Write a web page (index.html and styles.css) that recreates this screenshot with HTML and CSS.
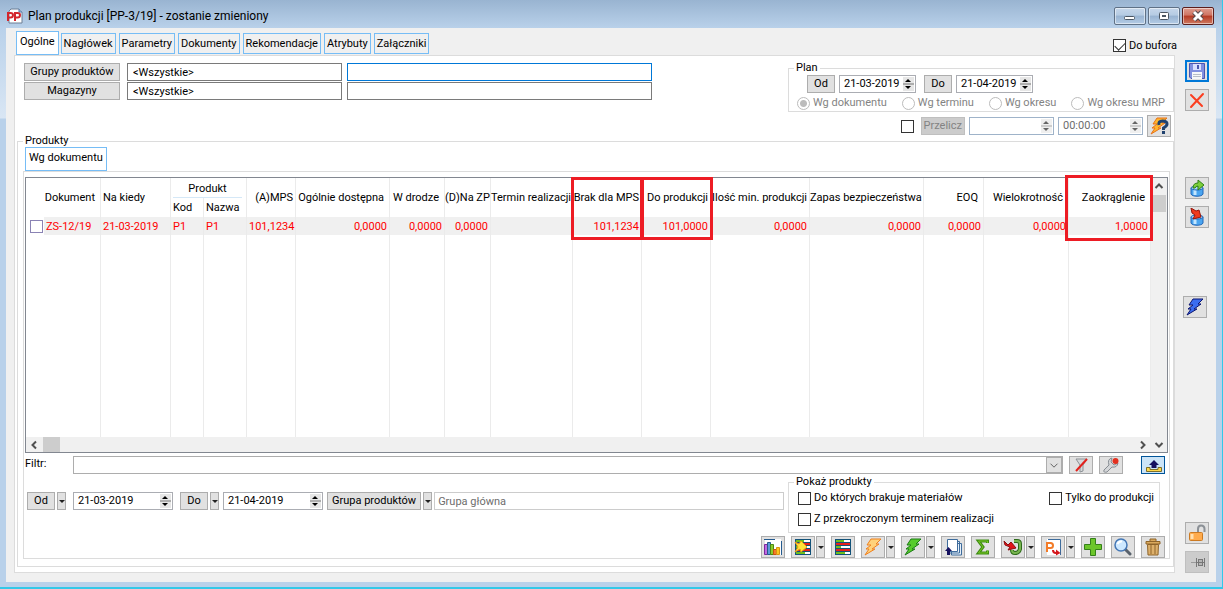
FILE: index.html
```html
<!DOCTYPE html>
<html lang="pl">
<head>
    <meta charset="UTF-8">
    <meta name="viewport" content="width=device-width, initial-scale=1.0">
    <title>Plan produkcji</title>
    <link rel="stylesheet" href="styles.css">
</head>
<body>
    <!-- Shared icons -->
    <svg class="sprite" aria-hidden="true">
        <symbol id="bolt" viewBox="0 0 20 18">
            <path d="M8 1H18L13 6H16L9 11H12L2 17L6 11H3L8 7H4Z" stroke-width="1"/>
        </symbol>
        <symbol id="rows" viewBox="0 0 20 18">
            <rect x="2" y="1" width="16" height="16" fill="#135279"/>
            <path d="M3 3H17M3 9H17M3 15H17" stroke="#fff" stroke-width="2"/>
            <path d="M3 3H11M3 9H8M3 15H12" stroke="#6fbd1c" stroke-width="2"/>
            <path d="M3 6H17M3 12H17" stroke="#e6201c" stroke-width="2"/>
        </symbol>
        <symbol id="can" viewBox="0 0 20 18">
            <path d="M4 9V15C5 18 15 18 16 15V9Z" fill="#4aa5f0" stroke="#2166b8"/>
            <path d="M8 11V16" stroke="#c4e6ff" stroke-width="3"/>
            <ellipse cx="10" cy="9" rx="6" ry="2" fill="#a9d5f7" stroke="#2166b8"/>
        </symbol>
    </svg>

    <div class="window">
        <header class="titlebar">
            <svg class="app-icon" viewBox="0 0 16 16">
                <path d="M4 1H12L15 4V15H2V3Z" fill="#fff" stroke="#6d7f95"/>
                <path d="M12 1V4H15" fill="#a9c3de" stroke="#4c74a8"/>
                <path d="M1 13V5H3.500Q6 5 6 7Q6 9.500 3.500 9.500H1M8 13V5H10.500Q13 5 13 7Q13 9.500 10.500 9.500H8" fill="none" stroke="#d3262d" stroke-width="2"/>
            </svg>
            <h1>Plan produkcji [PP-3/19] - zostanie zmieniony</h1>
            <div class="window-buttons">
                <button type="button" aria-label="Minimalizuj"><svg viewBox="0 0 30 16"><rect x="9.500" y="8.500" width="10" height="3" rx="1" fill="#fff" stroke="#4b5663"/></svg></button>
                <button type="button" aria-label="Maksymalizuj"><svg viewBox="0 0 30 16"><rect x="10.500" y="4.500" width="9" height="7" rx="1" fill="#fff" stroke="#4b5663"/><rect x="13.500" y="7.500" width="3" height="1" fill="#8fa9c6" stroke="#4b5663"/></svg></button>
                <button type="button" class="close" aria-label="Zamknij"><svg viewBox="0 0 30 16"><path d="M11 4L19 12M19 4L11 12" stroke="#54494d" stroke-width="5"/><path d="M11 4L19 12M19 4L11 12" stroke="#fff" stroke-width="3"/></svg></button>
            </div>
        </header>

        <div class="client">
            <main>
                <div class="top">
                    <nav class="tabs">
                        <button type="button" class="active">Ogólne</button>
                        <button type="button">Nagłówek</button>
                        <button type="button">Parametry</button>
                        <button type="button">Dokumenty</button>
                        <button type="button">Rekomendacje</button>
                        <button type="button">Atrybuty</button>
                        <button type="button">Załączniki</button>
                    </nav>
                    <label class="check buffer"><input type="checkbox" checked>Do bufora</label>
                </div>

                <div class="panel">
                    <div class="head">
                        <div class="filters">
                            <button type="button" class="btn">Grupy produktów</button>
                            <input type="text" class="field" aria-label="Grupa" value="&lt;Wszystkie&gt;">
                            <input type="text" class="field focused" aria-label="Opis grupy">
                            <button type="button" class="btn">Magazyny</button>
                            <input type="text" class="field" aria-label="Magazyn" value="&lt;Wszystkie&gt;">
                            <input type="text" class="field" aria-label="Opis magazynu">
                        </div>

                        <div class="plan">
                            <fieldset class="group">
                                <legend>Plan</legend>
                                <div class="dates">
                                    <button type="button" class="btn small">Od</button>
                                    <span class="spin"><input type="text" aria-label="Plan od" value="21-03-2019"><i></i></span>
                                    <button type="button" class="btn small">Do</button>
                                    <span class="spin"><input type="text" aria-label="Plan do" value="21-04-2019"><i></i></span>
                                </div>
                                <div class="radios">
                                    <label><input type="radio" name="mode" checked disabled>Wg dokumentu</label>
                                    <label><input type="radio" name="mode" disabled>Wg terminu</label>
                                    <label><input type="radio" name="mode" disabled>Wg okresu</label>
                                    <label><input type="radio" name="mode" disabled>Wg okresu MRP</label>
                                </div>
                            </fieldset>
                            <div class="recalc">
                                <input type="checkbox" aria-label="Przelicz automatycznie">
                                <button type="button" class="btn" disabled>Przelicz</button>
                                <span class="spin off"><input type="text" aria-label="Data" disabled><i></i></span>
                                <span class="spin off"><input type="text" aria-label="Godzina" value="00:00:00" disabled><i></i></span>
                                <button type="button" class="icon" aria-label="Pomoc">
                                    <svg viewBox="0 0 20 18"><use href="#bolt" fill="#ffb52e" stroke="#e8731a"/><path d="M10 8Q9 4 13.500 4Q18 4 18 7Q18 9 14.500 11V13" fill="none" stroke="#20426f" stroke-width="3"/><rect x="13" y="14" width="3" height="3" fill="#20426f"/></svg>
                                </button>
                            </div>
                        </div>
                    </div>

                    <fieldset class="group products">
                        <legend>Produkty</legend>
                        <button type="button" class="subtab">Wg dokumentu</button>
                        <div class="sheet">
                            <div class="grid">
                                <table>
                                    <colgroup>
                                        <col class="w75"><col class="w70"><col class="w33"><col class="w43"><col class="w49"><col class="w94"><col class="w55"><col class="w46"><col class="w82"><col class="w69"><col class="w69"><col class="w99"><col class="w114"><col class="w60"><col class="w85"><col class="w82">
                                    </colgroup>
                                    <thead>
                                        <tr>
                                            <th rowspan="2" class="doc">Dokument</th>
                                            <th rowspan="2" class="left">Na kiedy</th>
                                            <th colspan="2" class="span"><span>Produkt</span></th>
                                            <th rowspan="2" class="tight">(A)MPS</th>
                                            <th rowspan="2">Ogólnie dostępna</th>
                                            <th rowspan="2">W drodze</th>
                                            <th rowspan="2" class="tight">(D)Na ZP</th>
                                            <th rowspan="2" class="tight">Termin realizacji</th>
                                            <th rowspan="2" class="tight">Brak dla MPS<span class="mark"></span></th>
                                            <th rowspan="2" class="tight">Do produkcji<span class="mark"></span></th>
                                            <th rowspan="2" class="tight">Ilość min. produkcji</th>
                                            <th rowspan="2">Zapas bezpieczeństwa</th>
                                            <th rowspan="2">EOQ</th>
                                            <th rowspan="2">Wielokrotność</th>
                                            <th rowspan="2">Zaokrąglenie<span class="mark wide"></span></th>
                                        </tr>
                                        <tr>
                                            <th class="left">Kod</th>
                                            <th class="left">Nazwa</th>
                                        </tr>
                                    </thead>
                                    <tbody>
                                        <tr class="row">
                                            <td class="doc"><label><input type="checkbox">ZS-12/19</label></td>
                                            <td class="left">21-03-2019</td>
                                            <td class="left">P1</td>
                                            <td class="left">P1</td>
                                            <td>101,1234</td>
                                            <td>0,0000</td>
                                            <td>0,0000</td>
                                            <td>0,0000</td>
                                            <td></td>
                                            <td>101,1234</td>
                                            <td>101,0000</td>
                                            <td>0,0000</td>
                                            <td>0,0000</td>
                                            <td>0,0000</td>
                                            <td>0,0000</td>
                                            <td>1,0000</td>
                                        </tr>
                                        <tr class="empty">
                                            <td></td><td></td><td></td><td></td><td></td><td></td><td></td><td></td><td></td><td></td><td></td><td></td><td></td><td></td><td></td><td></td>
                                        </tr>
                                    </tbody>
                                </table>
                                <div class="vscroll">
                                    <svg viewBox="0 0 16 16"><path d="M4.500 10L8 6.500L11.500 10"/></svg>
                                    <div class="thumb"></div>
                                </div>
                                <div class="hscroll">
                                    <svg viewBox="0 0 16 16"><path d="M10 4.500L6.500 8L10 11.500"/></svg>
                                    <div class="thumb"></div>
                                    <svg class="end" viewBox="0 0 16 16"><path d="M6 4.500L9.500 8L6 11.500"/></svg>
                                </div>
                                <div class="corner"><svg viewBox="0 0 16 16"><path d="M4.500 6L8 9.500L11.500 6"/></svg></div>
                            </div>

                            <div class="filter-row">
                                <label for="filter">Filtr:</label>
                                <span class="combo">
                                    <select id="filter"><option></option></select>
                                    <svg viewBox="0 0 16 16"><path d="M4 6.500L8 10.500L12 6.500"/></svg>
                                </span>
                                <button type="button" class="icon low" aria-label="Wyczyść filtr">
                                    <svg viewBox="0 0 20 16"><path d="M5 2H16L12 8V14L9 15V8Z" fill="#d6d8da" stroke="#8c9196"/><path d="M5 14L16 2" stroke="#e3211c" stroke-width="2"/></svg>
                                </button>
                                <button type="button" class="icon low" aria-label="Konstruktor filtra">
                                    <svg viewBox="0 0 20 16"><path d="M3 13L8 8Q6 2 11 1L10 5L13 8L17 6Q16 11 11 10L6 15Q2 16 3 13Z" fill="#d4d6d8" stroke="#878c92"/><circle cx="14.500" cy="4" r="3" fill="#e3301f"/></svg>
                                </button>
                                <button type="button" class="icon low pressed" aria-label="Rozwiń">
                                    <svg viewBox="0 0 20 16"><path d="M3.500 10.500V14.500H18.500V10.500H15V12.500H7V10.500Z" fill="#ffd84a" stroke="#7b6d2a"/><path d="M11 3L16 8H13.500V11H8.500V8H6Z" fill="#15105f"/></svg>
                                </button>
                            </div>

                            <div class="bottom">
                                <div class="range">
                                    <button type="button" class="btn small">Od</button>
                                    <button type="button" class="drop" aria-label="Opcje od"></button>
                                    <span class="spin long from"><input type="text" aria-label="Od" value="21-03-2019"><i></i></span>
                                    <button type="button" class="btn small">Do</button>
                                    <button type="button" class="drop" aria-label="Opcje do"></button>
                                    <span class="spin long"><input type="text" aria-label="Do" value="21-04-2019"><i></i></span>
                                    <button type="button" class="btn">Grupa produktów</button>
                                    <button type="button" class="drop" aria-label="Opcje grupy"></button>
                                    <input type="text" class="field muted" aria-label="Nazwa grupy" value="Grupa główna" disabled>
                                </div>
                                <fieldset class="group show">
                                    <legend>Pokaż produkty</legend>
                                    <div class="show-line">
                                        <label class="check"><input type="checkbox">Do których brakuje materiałów</label>
                                        <label class="check"><input type="checkbox">Tylko do produkcji</label>
                                    </div>
                                    <label class="check"><input type="checkbox">Z przekroczonym terminem realizacji</label>
                                </fieldset>
                            </div>

                            <div class="toolbar">
                                <button type="button" class="icon" aria-label="Wykres"><svg viewBox="0 0 20 18"><path d="M2 1H18V17H2Z" fill="#fff"/><path d="M1 1.500H12M18.500 3V17" stroke="#245a8e"/><path d="M1.500 6.500H4.500V16.500H1.500Z" fill="#c16be0" stroke="#7a2a9c"/><path d="M4.500 4.500H7.500V16.500H4.500Z" fill="#5a9ad8" stroke="#245a8e"/><path d="M7.500 6.500H10.500V16.500H7.500Z" fill="#8bcc2c" stroke="#4b8a12"/><path d="M10.500 11.500H13.500V16.500H10.500Z" fill="#f37b27" stroke="#c8500f"/><path d="M13.500 9.500H16.500V16.500H13.500Z" fill="#ffc420" stroke="#d89410"/></svg></button>
                                <span class="split">
                                    <button type="button" class="icon" aria-label="Przenieś"><svg viewBox="0 0 20 18"><use href="#rows"/><path d="M2 4L6 6L8 3L14 9L8 14L7 11L2 14L5 9Z" fill="#ffe23a" stroke="#ee9a12"/></svg></button>
                                    <button type="button" class="drop" aria-label="Więcej"></button>
                                </span>
                                <button type="button" class="icon" aria-label="Harmonogram"><svg viewBox="0 0 20 18"><use href="#rows"/></svg></button>
                                <span class="split">
                                    <button type="button" class="icon" aria-label="Generuj"><svg viewBox="0 0 20 18"><use href="#bolt" fill="#ffd27a" stroke="#f0801e"/></svg></button>
                                    <button type="button" class="drop" aria-label="Więcej"></button>
                                </span>
                                <span class="split">
                                    <button type="button" class="icon" aria-label="Wykonaj"><svg viewBox="0 0 20 18"><use href="#bolt" fill="#57cc2d" stroke="#1c7d16"/></svg></button>
                                    <button type="button" class="drop" aria-label="Więcej"></button>
                                </span>
                                <button type="button" class="icon" aria-label="Kopie"><svg viewBox="0 0 20 18"><path d="M8.500 5.500H18.500V17H8.500ZM6.500 3.500H16.500V15H6.500Z" fill="#e7f1fb" stroke="#3e6c9c"/><path d="M4.500 1.500H14.500V13.500H4.500Z" fill="#fff" stroke="#3e6c9c"/><path d="M5.500 9L9 13H7V17H4V13H2Z" fill="#15105f"/></svg></button>
                                <button type="button" class="icon" aria-label="Suma"><svg viewBox="0 0 20 18"><path d="M14.500 5V3H5.500L10 9L5.500 15H14.500V12.500" fill="none" stroke="#3d8d12" stroke-width="3"/><path d="M14.500 5V3H5.500L10 9L5.500 15H14.500V12.500" fill="none" stroke="#79c525"/></svg></button>
                                <span class="split">
                                    <button type="button" class="icon" aria-label="Dołącz"><svg viewBox="0 0 20 18"><path d="M11 3H14Q17 3 17 6V11Q16 15 12 15Q9 15 9 12" fill="none" stroke="#2d6a1a" stroke-width="4"/><path d="M11 3H14Q17 3 17 6V11Q16 15 12 15Q9 15 9 12" fill="none" stroke="#79b650" stroke-width="2"/><path d="M1 3L5 7L8 4L13 10L5 12L7 9L2 7Z" fill="#e21418" stroke="#8b0f12"/></svg></button>
                                    <button type="button" class="drop" aria-label="Więcej"></button>
                                </span>
                                <span class="split">
                                    <button type="button" class="icon" aria-label="Raport"><svg viewBox="0 0 20 18"><path d="M4 1H18V17H4Z" fill="#fff"/><path d="M5 1.500H17.500V17" fill="none" stroke="#3e6c9c"/><path d="M4 14V5H7.500Q10 5 10 7.500Q10 10 7.500 10H4" fill="none" stroke="#f37b27" stroke-width="2"/><path d="M10 12Q10 15 13 15" fill="none" stroke="#d4161b" stroke-width="2"/><path d="M13 11.500L17.500 15L13 17.500Z" fill="#d4161b"/></svg></button>
                                    <button type="button" class="drop" aria-label="Więcej"></button>
                                </span>
                                <button type="button" class="icon" aria-label="Dodaj"><svg viewBox="0 0 20 18"><path d="M7.500 0.500H12.500V6.500H18.500V11.500H12.500V17.500H7.500V11.500H1.500V6.500H7.500Z" fill="#6cc62a" stroke="#35801a"/></svg></button>
                                <button type="button" class="icon" aria-label="Podgląd"><svg viewBox="0 0 20 18"><path d="M12 11L17 16" stroke="#59626c" stroke-width="3" stroke-linecap="round"/><circle cx="8" cy="7" r="6" fill="#cde8ff" stroke="#4477b5" stroke-width="1.500"/><path d="M4.500 6Q6 3 9 3.500" fill="none" stroke="#fff" stroke-width="2"/></svg></button>
                                <button type="button" class="icon" aria-label="Usuń"><svg viewBox="0 0 20 18"><path d="M7 3V1H13V3M3 3.500H17V6H3Z" fill="#d9a85c" stroke="#8e642a"/><path d="M4.500 6.500H15.500L15 17H5Z" fill="#ddb06b" stroke="#8e642a"/><path d="M8 7V16M12 7V16" stroke="#8e642a"/></svg></button>
                            </div>
                        </div>
                    </fieldset>
                </div>
            </main>

            <aside class="side">
                <button type="button" class="icon focus" aria-label="Zapisz"><svg viewBox="0 0 20 18"><path d="M2.500 1.500H17.500V16.500H4L2.500 15Z" fill="#7f8fe0" stroke="#4b56b0"/><rect x="6" y="2" width="8" height="6" fill="#d9e0ff"/><rect x="10" y="3" width="2" height="4" fill="#4b56b0"/><rect x="5" y="10" width="10" height="7" fill="#f5f7f9"/><path d="M6 12.500H14M6 14.500H14" stroke="#b7bdc8"/></svg></button>
                <button type="button" class="icon" aria-label="Anuluj"><svg viewBox="0 0 20 18"><path d="M4 4L15 15M16 3L4 16" stroke="#fb3e20" stroke-width="2" stroke-linecap="round"/></svg></button>
                <button type="button" class="icon gap-l" aria-label="Eksport"><svg viewBox="0 0 20 18"><use href="#can"/><path d="M6 9Q6 4 11 4V1L17 6L11 11V7Q9 7 8 9Z" fill="#7ccf3a" stroke="#2f7f18"/></svg></button>
                <button type="button" class="icon" aria-label="Import"><svg viewBox="0 0 20 18"><use href="#can"/><path d="M4 0L9 3L12 2L14 9L6 11L8 7L5 5Z" fill="#ef3a1d" stroke="#98160c"/></svg></button>
                <button type="button" class="icon gap-l shift" aria-label="Akcje"><svg viewBox="0 0 20 18"><use href="#bolt" fill="#3a6df0" stroke="#0c1470"/></svg></button>
                <button type="button" class="icon push" aria-label="Blokada"><svg viewBox="0 0 20 18"><path d="M11 9V5Q11 1.500 14 1.500Q17.500 1.500 17.500 5V8" fill="none" stroke="#8b9096" stroke-width="2"/><rect x="2.500" y="8.500" width="13" height="8" rx="1" fill="#ffab4c" stroke="#cc7a22"/><path d="M5 10V15" stroke="#ffe0b0" stroke-width="3"/></svg></button>
                <button type="button" class="icon" aria-label="Przypnij" disabled><svg viewBox="0 0 20 18"><path d="M4 9.500H9" stroke="#9a9a9a"/><path d="M9.500 5V14M17.500 5V14" stroke="#777"/><rect x="11.500" y="6.500" width="4" height="6" fill="#b5b5b5" stroke="#777"/><path d="M10 9.500H17" stroke="#777"/></svg></button>
            </aside>
        </div>
    </div>
</body>
</html>
```
FILE: styles.css
```css
* {
    box-sizing: border-box;
}
body {
    margin: 0;
    font-family: Roboto, "Noto Sans", sans-serif;
    font-size: 11px;
    line-height: 14px;
    color: #000;
}
button, input, select {
    font: inherit;
    color: inherit;
    margin: 0;
    padding: 0;
}
svg {
    display: block;
}
.sprite {
    position: absolute;
    width: 0;
    height: 0;
}

/* Window frame */
.window {
    display: flex;
    flex-direction: column;
    min-height: 100vh;
    padding: 0 6px 5px;
    background: linear-gradient(#99b4d1 0, #b9d1ea 28px, #d9e6f4 118px, #b9d1ea 119px);
    border-right: 1px solid #33c8e8;
    border-bottom: 2px solid #33c8e8;
}
.titlebar {
    display: flex;
    align-items: center;
    height: 28px;
    padding-top: 4px;
    padding-right: 2px;
}
.titlebar h1 {
    flex: 1;
    margin: 0 0 0 5px;
    font-size: 12px;
    font-weight: normal;
}
.app-icon {
    width: 16px;
    height: 16px;
    margin-left: 1px;
}
.window-buttons {
    display: flex;
    gap: 2px;
}
.window-buttons button {
    width: 32px;
    height: 18px;
    border: 1px solid #5f7186;
    border-radius: 2px;
    background: linear-gradient(#c6d7ea 0, #b5cbe3 45%, #98b3d1 50%, #b4cce6 100%);
    box-shadow: inset 0 0 0 1px rgba(255, 255, 255, 0.5);
}
.window-buttons .close {
    border-color: #5b1e1c;
    background: linear-gradient(#dd9d90 0, #cf7463 45%, #b53a24 50%, #cf7a62 100%);
}
.client {
    flex: 1;
    display: flex;
    background: #f0f0f0;
}
main {
    flex: 1;
    min-width: 0;
    display: flex;
    flex-direction: column;
    padding: 0 0 9px 8px;
}

/* Tabs */
.top {
    display: flex;
    justify-content: space-between;
    height: 27px;
}
.tabs {
    display: flex;
    align-items: flex-end;
    gap: 3px;
    padding: 0 0 1px 2px;
}
.tabs button {
    height: 21px;
    padding: 0 2px;
    border: 1px solid #76bdf6;
    background: #f0f0f0;
    white-space: nowrap;
}
.tabs .active {
    height: 24px;
    padding: 0 3px 3px;
    margin-bottom: -1px;
    margin-right: -1px;
    background: #fff;
}
.check {
    display: flex;
    align-items: center;
    gap: 3px;
}
.buffer {
    padding-top: 11px;
    padding-bottom: 3px;
    margin-right: -2px;
}
input[type="checkbox"] {
    appearance: none;
    flex: none;
    width: 13px;
    height: 13px;
    border: 1px solid #333;
    background: #fff;
}
input[type="checkbox"]:checked::before {
    content: "";
    display: block;
    width: 9px;
    height: 5px;
    margin: 2px 0 0 1px;
    border: solid #333;
    border-width: 0 0 1px 1px;
    transform: rotate(-45deg);
}

/* Common controls */
.panel {
    flex: 1;
    display: flex;
    flex-direction: column;
    padding: 0 0 5px 2px;
    border: 1px solid #dcdcdc;
    background: #fff;
}
.btn {
    height: 18px;
    padding: 0 4px;
    border: 1px solid #adadad;
    background: #e1e1e1;
    white-space: nowrap;
}
.btn.small {
    width: 28px;
}
.btn:disabled {
    padding: 0 2px;
    border-color: #bfbfbf;
    background: #ccc;
    color: #838383;
}
.field {
    width: 100%;
    height: 18px;
    padding: 0 5px;
    border: 1px solid #7a7a7a;
    background: #fff;
}
.focused {
    border-color: #0078d7;
}
.muted {
    flex: 1;
    width: auto;
    min-width: 0;
    padding: 0 3px;
    border-color: #ccc;
    color: #6d6d6d;
}
.group {
    min-width: 0;
    margin: 0;
    padding: 0;
    border: 1px solid #dcdcdc;
}
.group legend {
    margin-left: 5px;
    padding: 0 2px;
}
.spin {
    display: flex;
    width: 77px;
    height: 18px;
    padding: 1px;
    border: 1px solid #abadb3;
    background: #fff;
}
.spin.long {
    width: 100px;
}
.spin input {
    flex: 1;
    min-width: 0;
    padding-left: 3px;
    border: 0;
    background: none;
}
.spin i {
    position: relative;
    width: 11px;
    background: linear-gradient(#e6e6e6 6px, #adadad 6px, #adadad 8px, #e6e6e6 8px);
}
.spin i::before, .spin i::after {
    content: "";
    position: absolute;
    left: 2px;
    border: solid transparent;
    border-width: 0 3px;
}
.spin i::before {
    top: 2px;
    border-bottom: 3px solid #000;
}
.spin i::after {
    bottom: 2px;
    border-top: 3px solid #000;
}
.spin.off {
    width: 85px;
    border-color: #9fb3c9;
    color: #6d6d6d;
}
.spin.off i {
    opacity: 0.6;
}
.icon {
    flex: none;
    width: 24px;
    height: 22px;
    border: 1px solid #adadad;
    background: #e1e1e1;
}
.icon svg {
    width: 20px;
    height: 18px;
    margin: 0 auto;
}
.icon.low {
    height: 18px;
}
.icon.low svg {
    height: 16px;
}
.icon.focus {
    border: 2px solid #0078d7;
}
.icon.pressed {
    margin-left: 12px;
    border-color: #005499;
    background: #cce4f7;
}
.icon:disabled {
    border-color: #bfbfbf;
    background: #ccc;
}
.drop {
    position: relative;
    width: 9px;
    border: 1px solid #adadad;
    background: #e1e1e1;
}
.drop::after {
    content: "";
    position: absolute;
    left: 1px;
    top: 9px;
    border: solid transparent;
    border-width: 0 3px;
    border-top: 3px solid #222;
}

/* Upper part of the panel */
.head {
    display: flex;
    justify-content: space-between;
    gap: 16px;
}
.filters {
    display: grid;
    grid-template-columns: 96px 215px 305px;
    align-content: start;
    column-gap: 5px;
    row-gap: 1px;
    padding: 7px 0 0 7px;
}
.filters .field {
    margin-left: 2px;
}
.plan {
    width: 386px;
    padding-top: 5px;
}
.dates {
    display: flex;
    gap: 4px;
    padding-left: 18px;
}
.dates .spin + .btn {
    margin-left: 4px;
}
.radios {
    display: flex;
    justify-content: space-between;
    padding: 3px 8px 1px;
    color: #838383;
}
.radios label {
    display: flex;
    align-items: center;
    gap: 3px;
}
.radios input {
    appearance: none;
    width: 13px;
    height: 13px;
    border: 1px solid #bcbcbc;
    border-radius: 50%;
    background: #fff;
}
.radios input:checked {
    background: radial-gradient(#bcbcbc 3px, #fff 4px);
}
.recalc {
    display: flex;
    align-items: center;
    justify-content: flex-end;
    gap: 4px;
    padding: 3px 3px 0 0;
}
.recalc .btn {
    margin-left: 3px;
}
.recalc .icon svg {
    margin-top: -1px;
}

/* Product list */
.products {
    flex: 1;
    display: flex;
    flex-direction: column;
    margin-top: -3px;
    padding: 0 3px 7px 5px;
}
.products > legend {
    margin-left: 0;
}
.subtab {
    align-self: flex-start;
    display: block;
    height: 24px;
    margin: -1px 0 0 2px;
    padding: 0 3px 3px;
    border: 1px solid #76bdf6;
    background: #fff;
}
.sheet {
    padding: 5px 1px 0 1px;
    border: 1px solid #dcdcdc;
}
.grid {
    display: grid;
    grid-template-columns: 1fr 16px;
    grid-template-rows: auto 15px;
    border: 1px solid #828790;
    background: #fff;
}
table {
    width: 100%;
    table-layout: fixed;
    border-collapse: separate;
    border-spacing: 0;
}
.w33 { width: 33px; }
.w43 { width: 43px; }
.w46 { width: 46px; }
.w49 { width: 49px; }
.w55 { width: 55px; }
.w60 { width: 60px; }
.w69 { width: 69px; }
.w70 { width: 70px; }
.w75 { width: 75px; }
.w82 { width: 82px; }
.w85 { width: 85px; }
.w94 { width: 94px; }
.w99 { width: 99px; }
.w114 { width: 114px; }
th, td {
    padding: 0 2px;
    border-right: 1px solid #ebebeb;
    text-align: right;
    font-weight: normal;
    white-space: nowrap;
}
th {
    position: relative;
    height: 19px;
    padding: 0 5px 0 0;
}
th.left, td.left {
    padding-left: 2px;
    text-align: left;
}
th.tight {
    padding-right: 2px;
}
th.span {
    height: 20px;
    padding: 0 4px 0 2px;
    text-align: center;
}
.span span {
    display: block;
    padding: 3px 0 1px;
    border-bottom: 1px solid #d5e8f7;
}
.row td {
    height: 18px;
    padding-top: 1px;
    background: #f0f0f0;
    color: #f00;
}
.row td.doc {
    padding-left: 4px;
    background: linear-gradient(90deg, #fff 18px, #f0f0f0 18px);
    text-align: left;
}
.doc label {
    display: flex;
    align-items: center;
    gap: 3px;
}
.doc input[type="checkbox"] {
    border-color: #8a83b4;
}
.empty td {
    height: 202px;
}
.mark {
    position: absolute;
    z-index: 1;
    top: -1px;
    left: -2px;
    right: -3px;
    bottom: -23px;
    border: 3px solid #ed1c24;
}
.mark.wide {
    top: -3px;
    left: -4px;
    bottom: -24px;
}
.vscroll, .hscroll, .corner {
    background: #f0f0f0;
}
.grid svg {
    width: 16px;
    height: 16px;
    fill: none;
    stroke: #505050;
    stroke-width: 2;
}
.vscroll .thumb {
    height: 17px;
    margin: 1px 1px 0;
    background: #cdcdcd;
}
.hscroll {
    display: flex;
}
.hscroll .thumb {
    width: 17px;
    margin-left: 1px;
    background: #cdcdcd;
}
.hscroll .end {
    margin-left: auto;
}

/* Filter and lower part */
.filter-row {
    display: flex;
    gap: 6px;
    padding: 3px 3px 0 0;
}
.filter-row label {
    width: 42px;
    padding-top: 1px;
}
.combo {
    flex: 1;
    position: relative;
}
.combo select {
    appearance: none;
    display: block;
    width: 100%;
    height: 18px;
    border: 1px solid #adadad;
    border-radius: 0;
    background: #fff;
}
.combo svg {
    position: absolute;
    top: 1px;
    right: 1px;
    width: 16px;
    height: 16px;
    border: 1px solid #adadad;
    background: #e1e1e1;
    fill: none;
    stroke: #505050;
    pointer-events: none;
}
.bottom {
    display: flex;
    gap: 4px;
    padding-right: 8px;
}
.range {
    flex: 1;
    display: flex;
    gap: 2px;
    height: 18px;
    margin: 18px 0 0 2px;
}
.range .spin, .range .spin + .btn {
    margin-left: 2px;
}
.range .from {
    margin-left: 5px;
    margin-right: 3px;
}
.range .drop::after {
    top: 7px;
}
.show {
    width: 372px;
    height: 58px;
    margin-top: 1px;
    padding: 3px 5px 0 9px;
}
.show legend {
    margin-left: -4px;
}
.show-line {
    display: flex;
    justify-content: space-between;
    margin: -1px 0 7px;
}
.toolbar {
    display: flex;
    justify-content: flex-end;
    gap: 6px;
    padding: 3px 3px 0 0;
}
.split {
    display: flex;
    gap: 1px;
}

/* Side buttons */
.side {
    display: flex;
    flex-direction: column;
    gap: 7px;
    width: 41px;
    padding: 32px 7px 9px 10px;
}
.side .gap-l {
    margin-top: 59px;
}
.side .shift {
    margin-top: 61px;
    margin-left: -2px;
}
.side .push {
    margin-top: auto;
}
```
